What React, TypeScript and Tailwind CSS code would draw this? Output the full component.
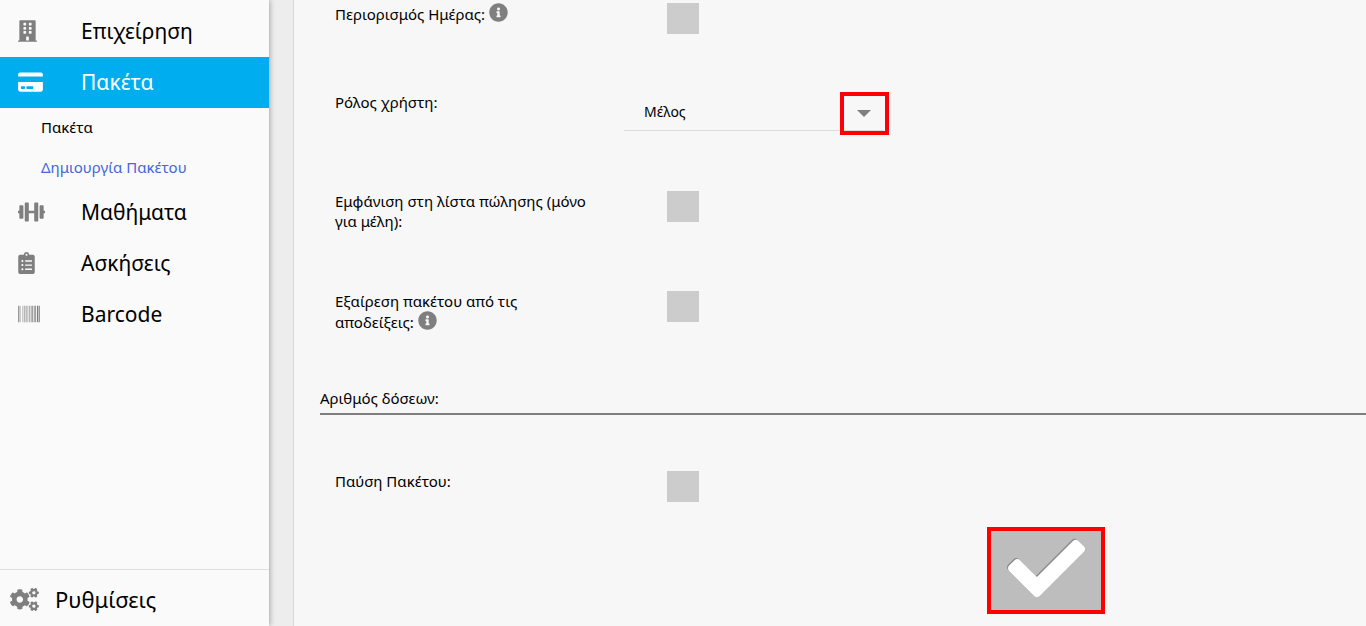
import type { ReactNode } from 'react'
import type { IconType } from 'react-icons'
import {
  FaBarcode,
  FaBuilding,
  FaCheck,
  FaClipboardList,
  FaCogs,
  FaCreditCard,
  FaDumbbell,
  FaInfoCircle,
} from 'react-icons/fa'
import clsx from 'clsx'

interface NavItemProps {
  icon: IconType
  iconWidth: string
  label: string
  active?: boolean
}

function NavItem({ icon: Icon, iconWidth, label, active }: NavItemProps) {
  return (
    <a
      href="#"
      className={clsx(
        'flex h-[51px] items-center pl-[18px] text-[21px]',
        active ? 'bg-[#00adef] text-white' : 'text-black'
      )}
    >
      <span className="w-[63px] pb-0.5">
        <Icon className={clsx('h-[22px]', iconWidth, active ? 'text-white' : 'text-[#7f7f7f]')} />
      </span>
      {label}
    </a>
  )
}

function Sidebar() {
  return (
    <aside className="z-10 flex w-[269px] shrink-0 flex-col bg-[#fafafa] shadow-[0_0_6px_rgba(0,0,0,0.4)]">
      <nav className="flex-1 pt-1.5">
        <NavItem icon={FaBuilding} iconWidth="w-[19px]" label="Επιχείρηση" />
        <NavItem icon={FaCreditCard} iconWidth="w-[25px]" label="Πακέτα" active />
        <a href="#" className="flex h-10 items-center pb-0.5 pl-[41px] text-[15px]">
          Πακέτα
        </a>
        <a href="#" className="flex h-[39px] items-center pb-px pl-[41px] text-[15px] text-[#4169d8]">
          Δημιουργία Πακέτου
        </a>
        <NavItem icon={FaDumbbell} iconWidth="w-[27px]" label="Μαθήματα" />
        <NavItem icon={FaClipboardList} iconWidth="w-[17px]" label="Ασκήσεις" />
        <NavItem icon={FaBarcode} iconWidth="w-[22px]" label="Barcode" />
      </nav>
      <a
        href="#"
        className="flex h-[57px] items-center gap-4 border-t border-[#e0e0e0] pt-0.5 pl-2.5 text-[22px]"
      >
        <FaCogs className="h-[23px] w-[29px] text-[#7f7f7f]" />
        Ρυθμίσεις
      </a>
    </aside>
  )
}

interface FieldProps {
  id: string
  label: string
  info?: boolean
  className: string
  children: ReactNode
}

function Field({ id, label, info, className, children }: FieldProps) {
  return (
    <div className={clsx('grid grid-cols-[289px_1fr] items-start pl-[15px]', className)}>
      <label htmlFor={id} className="pr-[30px]">
        {label}
        {info && <FaInfoCircle className="ml-1 inline h-[19px] w-[19px] align-[-2px] text-[#7f7f7f]" />}
      </label>
      {children}
    </div>
  )
}

function Checkbox({ id }: { id: string }) {
  return (
    <input
      id={id}
      type="checkbox"
      className="ml-[43px] h-[31px] w-8 appearance-none bg-[#ccc] checked:bg-[#00adef]"
    />
  )
}

export default function App() {
  return (
    <div className="flex h-screen overflow-hidden bg-[#ededed] font-['Noto_Sans',sans-serif] text-black">
      <Sidebar />
      <main className="ml-6 flex-1 border-l border-[#d8d8d8] bg-[#f7f7f7] pt-[3px] pl-[26px] text-[15px] leading-5">
        <form>
          <Field id="day-limit" label="Περιορισμός Ημέρας:" info className="h-[89px]">
            <Checkbox id="day-limit" />
          </Field>
          <Field id="role" label="Ρόλος χρήστη:" className="h-[99px]">
            <div className="relative mt-px w-[260px]">
              <select
                id="role"
                className="h-[38px] w-full appearance-none border-b border-[#dcdcdc] bg-transparent pl-5 text-sm"
              >
                <option>Μέλος</option>
              </select>
              <span className="pointer-events-none absolute -top-px -right-[5px] flex h-[43px] w-[49px] items-center justify-center border-4 border-[#fb0007] pr-0.5">
                <svg viewBox="0 0 14 7" className="h-[7px] w-3.5 fill-[#7f7f7f]">
                  <path d="M0 0h14L7 7z" />
                </svg>
              </span>
            </div>
          </Field>
          <Field id="sale-list" label="Εμφάνιση στη λίστα πώλησης (μόνο για μέλη):" className="h-[100px]">
            <Checkbox id="sale-list" />
          </Field>
          <Field id="no-receipt" label="Εξαίρεση πακέτου από τις αποδείξεις:" info className="h-[97px]">
            <Checkbox id="no-receipt" />
          </Field>
          <h2 className="mb-14 h-[27px] border-b-2 border-[#7f7f7f]">Αριθμός δόσεων:</h2>
          <Field id="pause" label="Παύση Πακέτου:" className="h-14">
            <Checkbox id="pause" />
          </Field>
          <button
            type="button"
            aria-label="Αποθήκευση"
            className="ml-[667px] flex h-[87px] w-[118px] items-center justify-center border-4 border-[#fe0000] bg-[#bdbdbd] pb-1"
          >
            <FaCheck className="h-[77px] w-[77px] text-white drop-shadow-[-1px_-1px_0_#8a8a8a]" />
          </button>
        </form>
      </main>
    </div>
  )
}
